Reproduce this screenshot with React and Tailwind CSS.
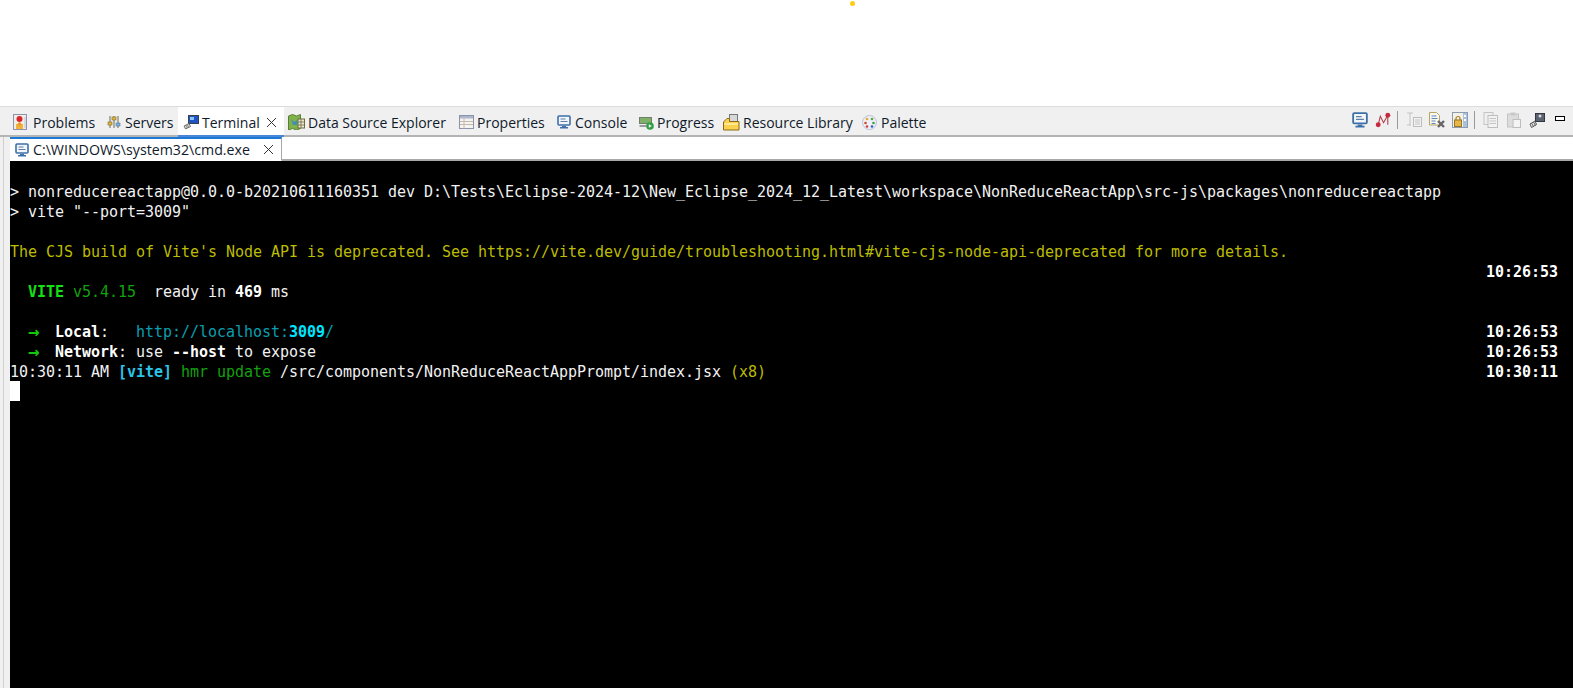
const mono = { fontFamily: '"DejaVu Sans Mono", monospace' };

function ProblemsIcon() {
  return (
    <svg width="16" height="16" viewBox="0 0 16 16">
      <rect x="0.5" y="0.5" width="13" height="15" fill="#f3ece4" stroke="#8d93ad" />
      <circle cx="6.5" cy="5" r="3" fill="#d8272b" />
      <rect x="3" y="10" width="7" height="5" fill="#efb23a" />
      <circle cx="6.5" cy="10" r="1.8" fill="#e89a2c" />
      <rect x="11" y="3" width="2" height="11" fill="#d3d8e6" />
    </svg>
  );
}

function ServersIcon() {
  return (
    <svg width="14" height="14" viewBox="0 0 14 14">
      <path d="M3 1v12M7 1v12M11 1v12" stroke="#6f6a55" strokeWidth="1" />
      <rect x="1" y="7" width="4" height="3" fill="#e3b53e" stroke="#7c6a2b" strokeWidth="0.6" />
      <rect x="5" y="2" width="4" height="3" fill="#e3b53e" stroke="#7c6a2b" strokeWidth="0.6" />
      <rect x="9" y="8" width="4" height="3" fill="#7fb2d8" stroke="#47739a" strokeWidth="0.6" />
    </svg>
  );
}

function TerminalIcon() {
  return (
    <svg width="16" height="16" viewBox="0 0 16 16">
      <rect x="5.5" y="1.5" width="10" height="8" fill="#1d55c4" stroke="#3a3f4a" />
      <rect x="7" y="3" width="4" height="3" fill="#8fc1f2" />
      <path d="M6 9.5L1 12l1.5 3 5-2.5z" fill="#d9d9d9" stroke="#555" strokeWidth="0.8" />
      <path d="M2.5 11l2 3M4 10.5l2 3" stroke="#666" strokeWidth="0.7" />
    </svg>
  );
}

function MapIcon() {
  return (
    <svg width="17" height="16" viewBox="0 0 17 16">
      <path d="M0.5 2l4-1.5 4 1.5 4-1.5v14l-4 1.5-4-1.5-4 1.5z" fill="#7fb24a" stroke="#5c7f35" />
      <path d="M3 5l3 3 3-2v5H5z" fill="#3f8fb5" />
      <rect x="10" y="5" width="6.5" height="9" fill="#efe9cf" stroke="#6a6a45" />
      <path d="M10 8h6.500M10 11h6.500M13 5v9" stroke="#6a6a45" strokeWidth="0.8" />
    </svg>
  );
}

function TableIcon() {
  return (
    <svg width="15" height="14" viewBox="0 0 15 14">
      <rect x="0.500" y="0.500" width="14" height="13" fill="#f5f3ef" stroke="#8b93a8" />
      <rect x="1" y="1" width="13" height="2.500" fill="#aeb6c9" />
      <path d="M5 3.500v10M1 6.500h13M1 9.500h13" stroke="#c6b9ae" strokeWidth="1" />
    </svg>
  );
}

function MonitorIcon({ size = 14 }) {
  return (
    <svg width={size} height={size} viewBox="0 0 14 14">
      <rect x="1" y="1" width="12" height="9" rx="1" fill="#f2f6fb" stroke="#3e6fa8" strokeWidth="1.600" />
      <path d="M3.500 4h5M3.500 6.500h7" stroke="#5d7ea6" strokeWidth="1" />
      <path d="M5 11h4v1h2v1.500H3V12h2z" fill="#3e6fa8" />
    </svg>
  );
}

function ProgressIcon() {
  return (
    <svg width="15" height="15" viewBox="0 0 15 15">
      <rect x="0.500" y="2.500" width="12" height="6" fill="#7fb069" stroke="#6f7f68" />
      <rect x="0.500" y="10" width="7" height="2" fill="#9b9b9b" />
      <circle cx="11" cy="11" r="3.800" fill="#2f9e44" />
      <path d="M9.800 9.200l3 1.800-3 1.800z" fill="#fff" />
    </svg>
  );
}

function FolderIcon() {
  return (
    <svg width="17" height="17" viewBox="0 0 17 17">
      <rect x="6.500" y="0.500" width="8" height="8" fill="#d8d8d8" stroke="#777" />
      <path d="M0.500 8L4 4.500h2.500v3H16v8.500H0.500z" fill="#fbd24e" stroke="#8a6a16" />
      <rect x="1.500" y="9" width="13.500" height="2" fill="#ffe88f" />
    </svg>
  );
}

function PaletteIcon() {
  return (
    <svg width="15" height="15" viewBox="0 0 15 15">
      <circle cx="7.500" cy="7.500" r="7" fill="#eef0f6" stroke="#b9c0d4" />
      <circle cx="5" cy="4" r="1.300" fill="#e2a92b" />
      <circle cx="10" cy="4" r="1.300" fill="#5ca53a" />
      <circle cx="3.500" cy="8" r="1.300" fill="#d8442f" />
      <circle cx="11.500" cy="8" r="1.300" fill="#3aa04a" />
      <circle cx="5" cy="11.500" r="1.300" fill="#d43c3c" />
      <circle cx="10" cy="11.500" r="1.300" fill="#2f5fc4" />
    </svg>
  );
}

function CloseIcon() {
  return (
    <svg width="11" height="11" viewBox="0 0 11 11">
      <path d="M1 1l9 9M10 1l-9 9" stroke="#333" strokeWidth="1" />
    </svg>
  );
}

function TerminalIconDark() {
  return (
    <svg width="16" height="16" viewBox="0 0 16 16">
      <rect x="6.500" y="1.500" width="9" height="8" fill="#5b6270" stroke="#33373f" />
      <circle cx="11" cy="4" r="1.500" fill="#d9dde4" />
      <path d="M6 9L1 12l1.500 3.500 5-3z" fill="#eee" stroke="#444" strokeWidth="0.900" />
      <path d="M2.500 11l2 3.500M4.500 10l2 3.500" stroke="#444" strokeWidth="0.800" />
    </svg>
  );
}

function Tab({ icon, label, width, gap = "gap-[5px]" }) {
  return (
    <div className={`flex h-full items-center pt-[2px] ${gap}`} style={{ width }}>
      {icon}
      <span className="pt-px">{label}</span>
    </div>
  );
}

function Toolbar() {
  return (
    <div className="flex items-center pr-2 pb-[3px] [&>svg]:shrink-0">
      <MonitorIcon size={16} />
      <svg className="ml-[7px]" width="16" height="16" viewBox="0 0 15 15">
        <path d="M3 12L5 4l3 6 4-7v9" fill="none" stroke="#b23b4a" strokeWidth="1" />
        <circle cx="3" cy="12" r="2.300" fill="#c9283c" />
        <circle cx="12" cy="3" r="2.300" fill="#c9283c" />
      </svg>
      <div className="ml-[6px] h-[18px] w-px bg-[#9a9a9a]" />
      <svg className="ml-2" width="16" height="15" viewBox="0 0 16 15">
        <path d="M1 1h6M4 1v12M1 13h4" stroke="#c4c4c4" strokeWidth="1" fill="none" />
        <rect x="7.500" y="5.500" width="8" height="9" fill="#f2f2f2" stroke="#bdbdbd" />
        <path d="M9 8h5M9 10h5M9 12h5" stroke="#c4c4c4" />
      </svg>
      <svg className="ml-[7px]" width="16" height="16" viewBox="0 0 16 16">
        <path d="M0.500 0.500h7l3 3V13h-10z" fill="#fbf8ee" stroke="#b8a565" />
        <path d="M2.500 4h5M2.500 6.500h6M2.500 9h4M2.500 11.500h4" stroke="#5a86c4" />
        <path d="M9 9l6 6M15 9l-6 6" stroke="#666" strokeWidth="2.400" />
      </svg>
      <svg className="ml-[7px]" width="16" height="16" viewBox="0 0 16 16">
        <rect x="0.500" y="0.500" width="15" height="15" fill="#f4f1e4" stroke="#8b9bb0" />
        <rect x="11" y="1" width="4" height="14" fill="#a9c2e0" />
        <rect x="12" y="3" width="2" height="2" fill="#fff" />
        <rect x="12" y="7" width="2" height="2" fill="#fff" />
        <path d="M4 8V6.500a2 2 0 0 1 4 0V8" fill="none" stroke="#a67c1e" strokeWidth="1.200" />
        <rect x="2.500" y="8" width="7" height="6.500" fill="#e5b748" stroke="#9a7420" />
      </svg>
      <div className="ml-[6px] h-[18px] w-px bg-[#9a9a9a]" />
      <svg className="ml-2" width="16" height="16" viewBox="0 0 15 16">
        <rect x="0.500" y="0.500" width="9" height="12" fill="#efefef" stroke="#c4c4c4" />
        <rect x="4.500" y="3.500" width="9.500" height="12" fill="#f2f2f2" stroke="#bdbdbd" />
        <path d="M6 6.500h6.500M6 9h6.500M6 11.500h6.500" stroke="#c4c4c4" />
      </svg>
      <svg className="ml-[7px]" width="16" height="16" viewBox="0 0 15 16">
        <rect x="1" y="2" width="11" height="13" fill="#dcdcdc" stroke="#c4c4c4" />
        <rect x="4" y="0.500" width="5" height="3" fill="#c8c8c8" />
        <rect x="6.500" y="7.500" width="7.500" height="8" fill="#f4f4f4" stroke="#bdbdbd" />
      </svg>
      <span className="ml-[7px] flex">
        <TerminalIconDark />
      </span>
      <div className="mb-[3px] ml-[10px] h-[5px] w-[10px] border border-black bg-white" />
    </div>
  );
}

function Arrow() {
  return (
    <span className="mr-[-3px] inline-block w-[12px] align-[-1px] text-[19px] leading-[15px] font-bold text-[#16c60c]">
      →
    </span>
  );
}

function Row({ children, time }) {
  return (
    <div className="flex h-5 items-center justify-between whitespace-pre">
      <span className="leading-5">{children}</span>
      {time && <span className="font-bold text-white">{time}</span>}
    </div>
  );
}

export default function App() {
  return (
    <div className="flex h-[688px] w-full flex-col overflow-hidden bg-white">
      <div className="flex h-[106px] justify-center">
        <div className="mt-px ml-[131px] h-[5px] w-[5px] rounded-full bg-[#ffcc11]" />
      </div>

      <div
        className="flex h-[31px] border-t border-b-2 border-t-[#dcdcdc] border-b-[#b4b4b4] bg-[#f0f0f0] pl-[13px] text-[14px] text-[#0f1a2b]"
        style={{ fontFamily: '"Open Sans", sans-serif' }}
      >
        <Tab icon={<ProblemsIcon />} label="Problems" width={94} gap="gap-[4px]" />
        <Tab icon={<ServersIcon />} label="Servers" width={71} gap="gap-[4px]" />
        <div className="flex h-[30px] w-[106px] items-center gap-[3px] border-b-[2px] border-b-[#4a86d8] bg-white pt-[2px] pl-[5px]">
          <TerminalIcon />
          <span className="pt-px">Terminal</span>
          <span className="ml-[3px]">
            <CloseIcon />
          </span>
        </div>
        <Tab icon={<MapIcon />} label="Data Source Explorer" width={171} gap="gap-[3px] ml-[4px]" />
        <Tab icon={<TableIcon />} label="Properties" width={98} gap="gap-[3px]" />
        <Tab icon={<MonitorIcon />} label="Console" width={82} gap="gap-[4px]" />
        <Tab icon={<ProgressIcon />} label="Progress" width={84} gap="gap-[3px]" />
        <Tab icon={<FolderIcon />} label="Resource Library" width={139} gap="gap-[3px]" />
        <Tab icon={<PaletteIcon />} label="Palette" width={80} gap="gap-[4px]" />
        <div className="ml-auto flex">
          <Toolbar />
        </div>
      </div>

      <div className="flex min-h-0 flex-1 bg-[#f0f0f0] pl-[3px]">
        <div className="w-[7px] border-l border-l-[#cfcfcf]" />
        <div className="flex min-w-0 flex-1 flex-col">
          <div
            className="flex h-[24px] border-b-2 border-b-[#a8a8a8] bg-white text-[14.2px] text-[#0f1a2b]"
            style={{ fontFamily: '"Open Sans", sans-serif' }}
          >
            <div className="flex h-[24px] w-[272px] items-center gap-[4px] border-t-2 border-r border-b border-t-[#1c7ad6] border-r-[#a8a8a8] border-b-white bg-white pl-[5px]">
              <MonitorIcon />
              <span>C:\WINDOWS\system32\cmd.exe</span>
              <span className="ml-[9px]">
                <CloseIcon />
              </span>
            </div>
          </div>
          <div
            className="flex-1 bg-black pt-[21px] pr-[15px] text-[15px] leading-5 tracking-[-0.03px] text-[#f2f2f2]"
            style={mono}
          >
            <Row>{"> nonreducereactapp@0.0.0-b20210611160351 dev D:\\Tests\\Eclipse-2024-12\\New_Eclipse_2024_12_Latest\\workspace\\NonReduceReactApp\\src-js\\packages\\nonreducereactapp"}</Row>
            <Row>{'> vite "--port=3009"'}</Row>
            <Row />
            <Row>
              <span className="text-[#bcbc00]">
                The CJS build of Vite's Node API is deprecated. See https://vite.dev/guide/troubleshooting.html#vite-cjs-node-api-deprecated for more details.
              </span>
            </Row>
            <Row time="10:26:53" />
            <Row>
              {"  "}
              <span className="font-bold text-[#16e016]">VITE</span>
              <span className="text-[#13a10e]"> v5.4.15</span>
              {"  ready in "}
              <span className="font-bold text-white">469</span>
              {" ms"}
            </Row>
            <Row />
            <Row time="10:26:53">
              {"  "}
              <Arrow />
              {"  "}
              <span className="font-bold text-white">Local</span>
              {":   "}
              <span className="text-[#0a9fb0]">
                http://localhost:<span className="font-bold text-[#00e5ff]">3009</span>/
              </span>
            </Row>
            <Row time="10:26:53">
              {"  "}
              <Arrow />
              {"  "}
              <span className="font-bold text-white">Network</span>
              {": use "}
              <span className="font-bold text-white">--host</span>
              {" to expose"}
            </Row>
            <Row time="10:30:11">
              {"10:30:11 AM "}
              <span className="font-bold text-[#2bc4e8]">[vite]</span>
              <span className="text-[#13a10e]"> hmr update </span>
              {"/src/components/NonReduceReactAppPrompt/index.jsx "}
              <span className="text-[#bcbc00]">(x8)</span>
            </Row>
            <div className="-mt-px h-5 w-[10px] bg-white" />
          </div>
        </div>
      </div>
    </div>
  );
}
